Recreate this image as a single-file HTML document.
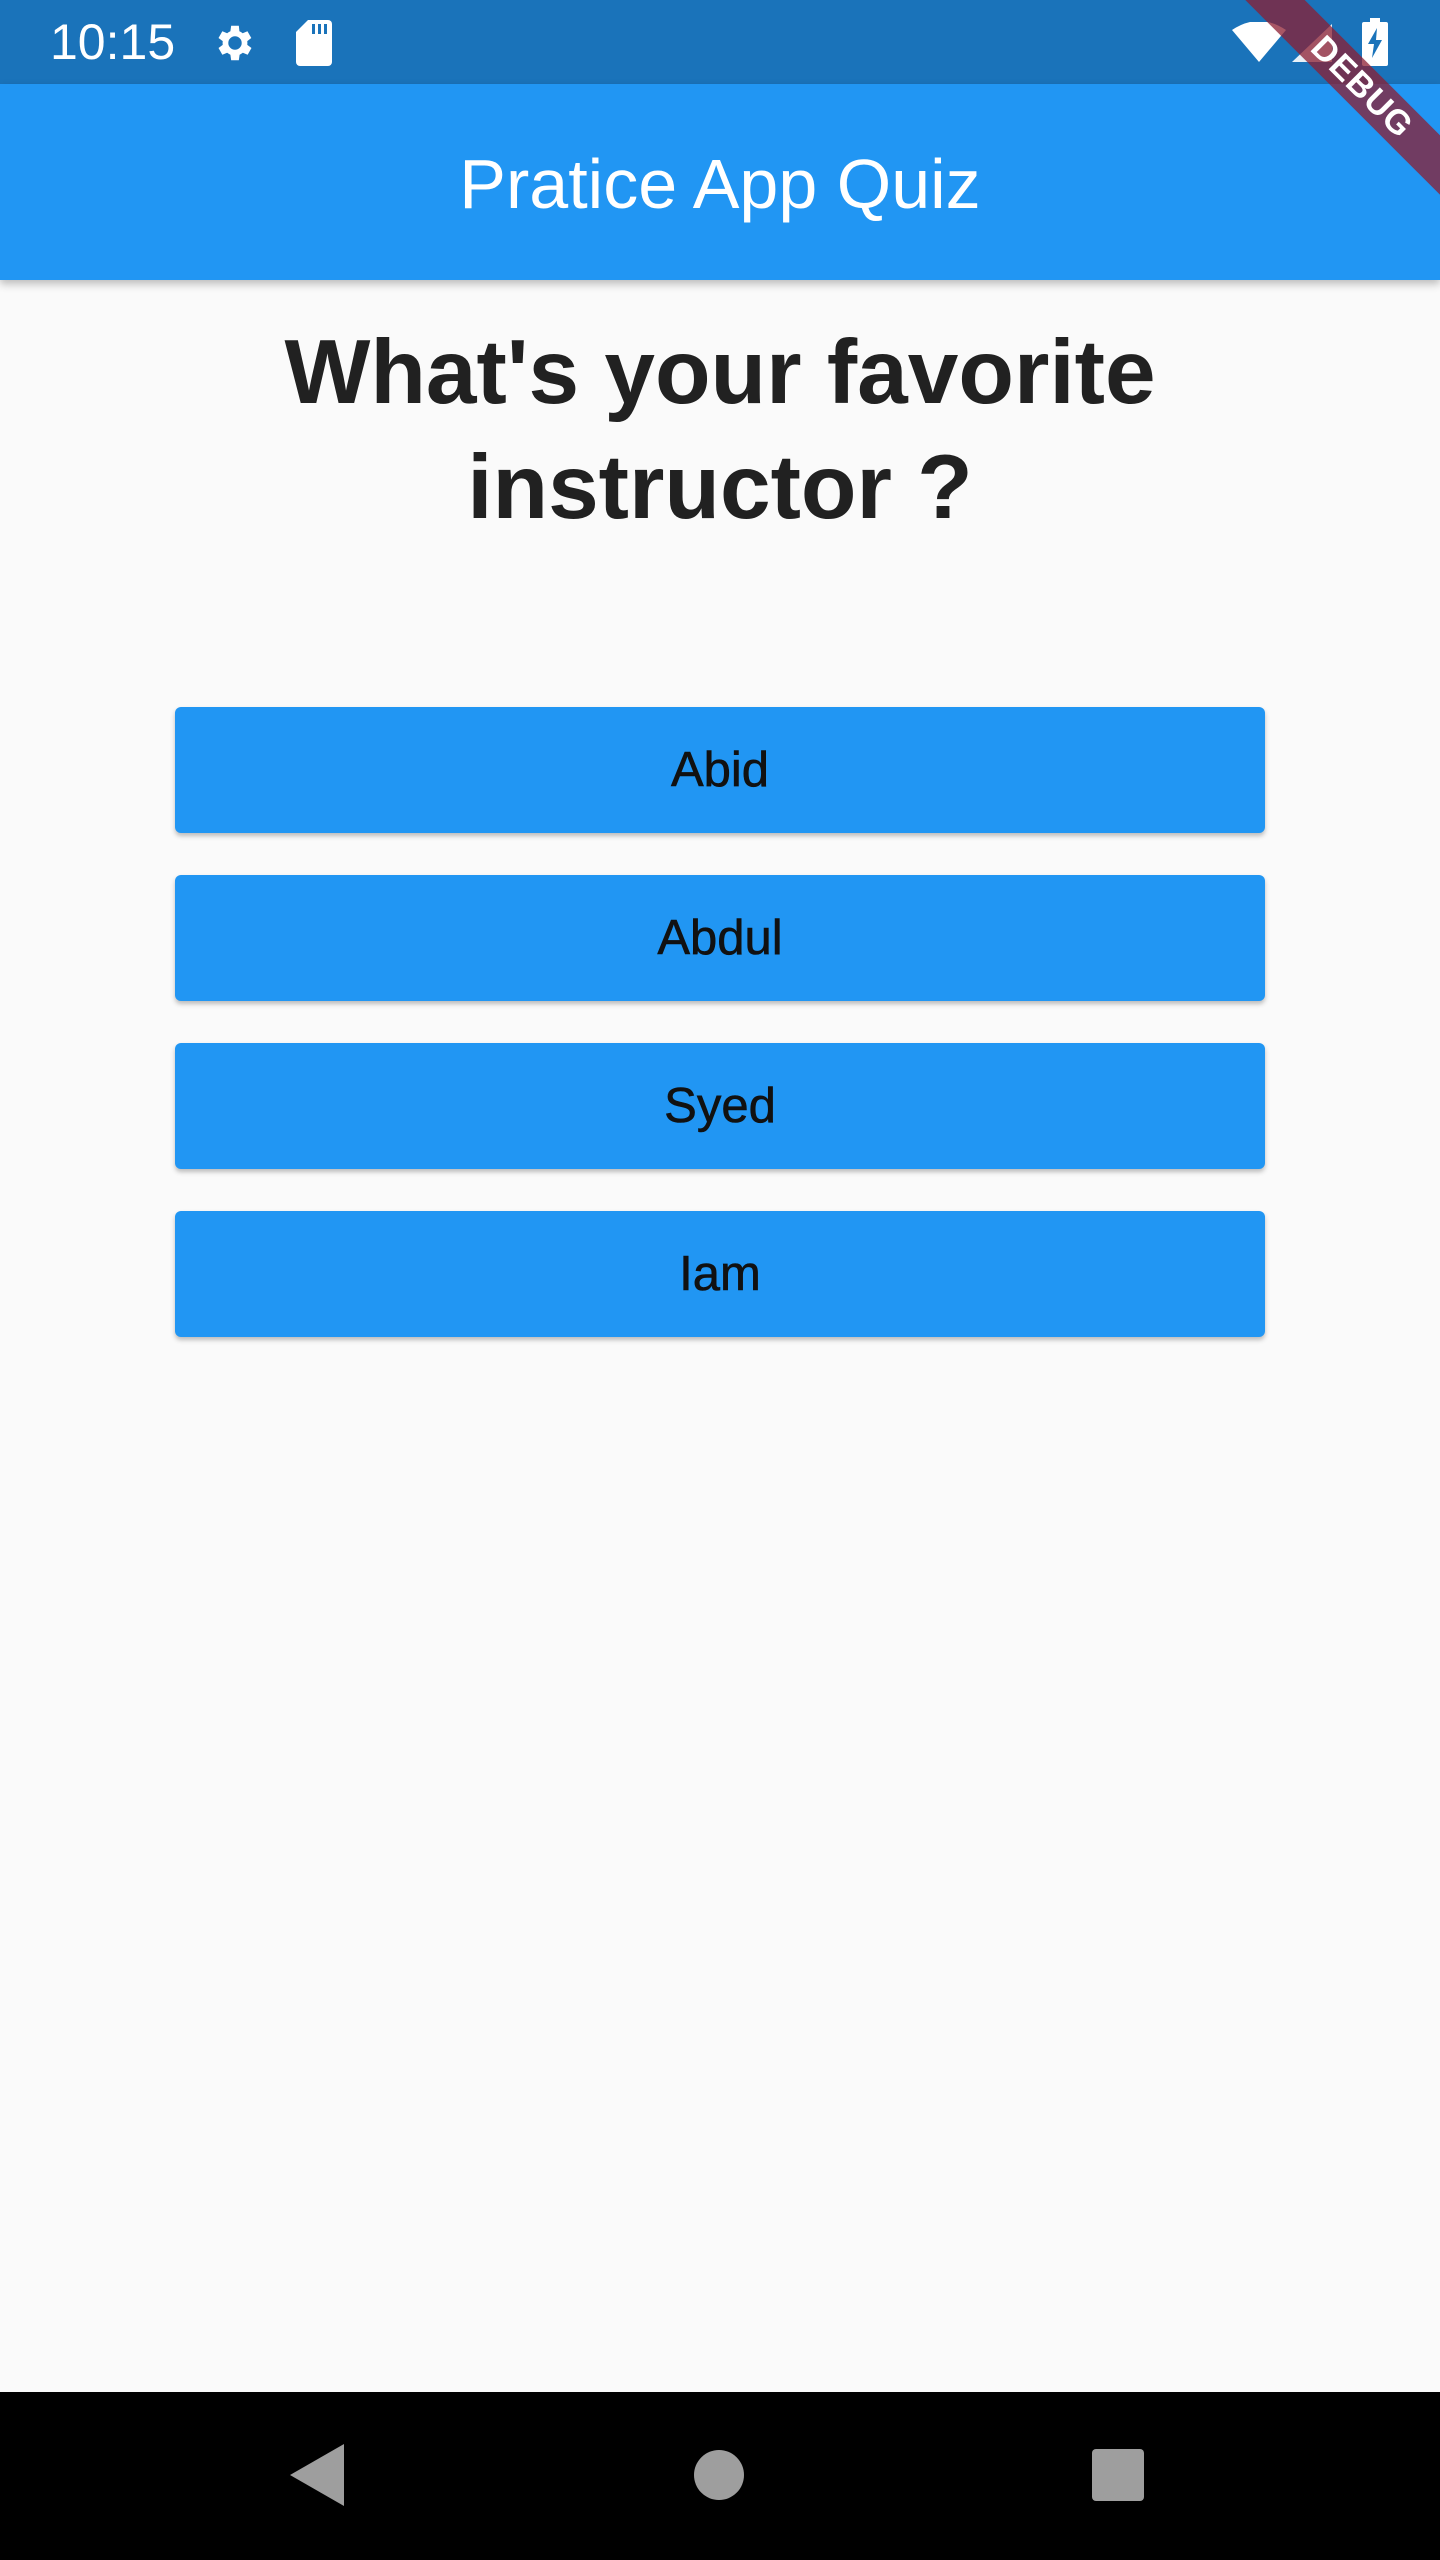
<!DOCTYPE html>
<html><head><meta charset="utf-8"><style>
*{margin:0;padding:0;box-sizing:border-box}
body{width:1440px;height:2560px;background:#fafafa;font-family:"Liberation Sans",sans-serif;position:relative;overflow:hidden}
.status{position:absolute;left:0;top:0;width:1440px;height:84px;background:#1A73BA;color:#fff}
.appbar{position:absolute;left:0;top:84px;width:1440px;height:196px;background:#2196F3;box-shadow:0 4px 8px rgba(0,0,0,.25)}
.appbar div{position:absolute;width:100%;top:60px;text-align:center;color:#fff;font-size:70px;line-height:80px}
.q{position:absolute;top:315px;width:1440px;text-align:center;font-weight:bold;font-size:91px;line-height:115px;color:#212121}
.btn{position:absolute;left:175px;width:1090px;height:126px;background:#2196F3;border-radius:6px;box-shadow:0 3px 5px rgba(0,0,0,.25);text-align:center;line-height:126px;font-size:49px;color:#111;-webkit-text-stroke:0.6px #111}
.nav{position:absolute;left:0;top:2392px;width:1440px;height:168px;background:#000}
.banner{position:absolute;left:1162px;top:66px;width:400px;height:42px;background:rgba(140,30,50,.75);transform:rotate(45deg);color:#fff;font-weight:bold;font-size:34px;line-height:42px;text-align:center;letter-spacing:1px}
</style></head><body>
<div class="status">
<div style="position:absolute;left:50px;top:14px;font-size:50px;line-height:56px">10:15</div>
<svg style="position:absolute;left:212px;top:20px" width="46" height="46" viewBox="0 0 24 24"><path fill="#fff" d="M19.4 13a7.5 7.5 0 000-2l2.1-1.6-2-3.5-2.5 1a7.6 7.6 0 00-1.7-1L15 3h-4l-.4 2.9a7.6 7.6 0 00-1.7 1l-2.5-1-2 3.5L6.6 11a7.5 7.5 0 000 2l-2.2 1.6 2 3.5 2.5-1c.5.4 1.1.7 1.7 1L11 21h4l.4-2.9c.6-.3 1.2-.6 1.7-1l2.5 1 2-3.5zM13 15.5a3.5 3.5 0 110-7 3.5 3.5 0 010 7z" transform="translate(-1 0)"/></svg>
<svg style="position:absolute;left:296px;top:20px" width="36" height="46" viewBox="0 0 18 23"><path fill="#fff" d="M6 0h10a2 2 0 012 2v19a2 2 0 01-2 2H2a2 2 0 01-2-2V6z"/><path fill="#1A73BA" d="M8 2h1.5v5H8zM11 2h1.5v5H11zM14 2h1.5v5H14z"/></svg>
<svg style="position:absolute;left:1232px;top:22px" width="54" height="40" viewBox="0 0 27 20"><path fill="#fff" d="M13.5 20L0 4Q13.5-5 27 4z"/></svg>
<svg style="position:absolute;left:1292px;top:24px" width="40" height="38" viewBox="0 0 20 19"><path fill="#fff" d="M20 0v19H0z" opacity=".9"/></svg>
<svg style="position:absolute;left:1362px;top:18px" width="26" height="48" viewBox="0 0 13 24"><path fill="#fff" d="M4 0h5v2h3a1 1 0 011 1v20a1 1 0 01-1 1H1a1 1 0 01-1-1V3a1 1 0 011-1h3z"/><path fill="#1A73BA" d="M7.5 5L3 13h3l-1 7 5-9H7z"/></svg>
</div>
<div class="appbar"><div>Pratice App Quiz</div></div>
<div class="q">What's your favorite<br>instructor ?</div>
<div class="btn" style="top:707px">Abid</div>
<div class="btn" style="top:875px">Abdul</div>
<div class="btn" style="top:1043px">Syed</div>
<div class="btn" style="top:1211px">Iam</div>
<div class="nav">
<svg style="position:absolute;left:290px;top:52px" width="54" height="62" viewBox="0 0 27 31"><path fill="#9e9e9e" d="M27 0v31L0 15.5z"/></svg>
<div style="position:absolute;left:694px;top:58px;width:50px;height:50px;border-radius:50%;background:#9e9e9e"></div>
<div style="position:absolute;left:1092px;top:57px;width:52px;height:52px;border-radius:4px;background:#9e9e9e"></div>
</div>
<div class="banner">DEBUG</div>
</body></html>
